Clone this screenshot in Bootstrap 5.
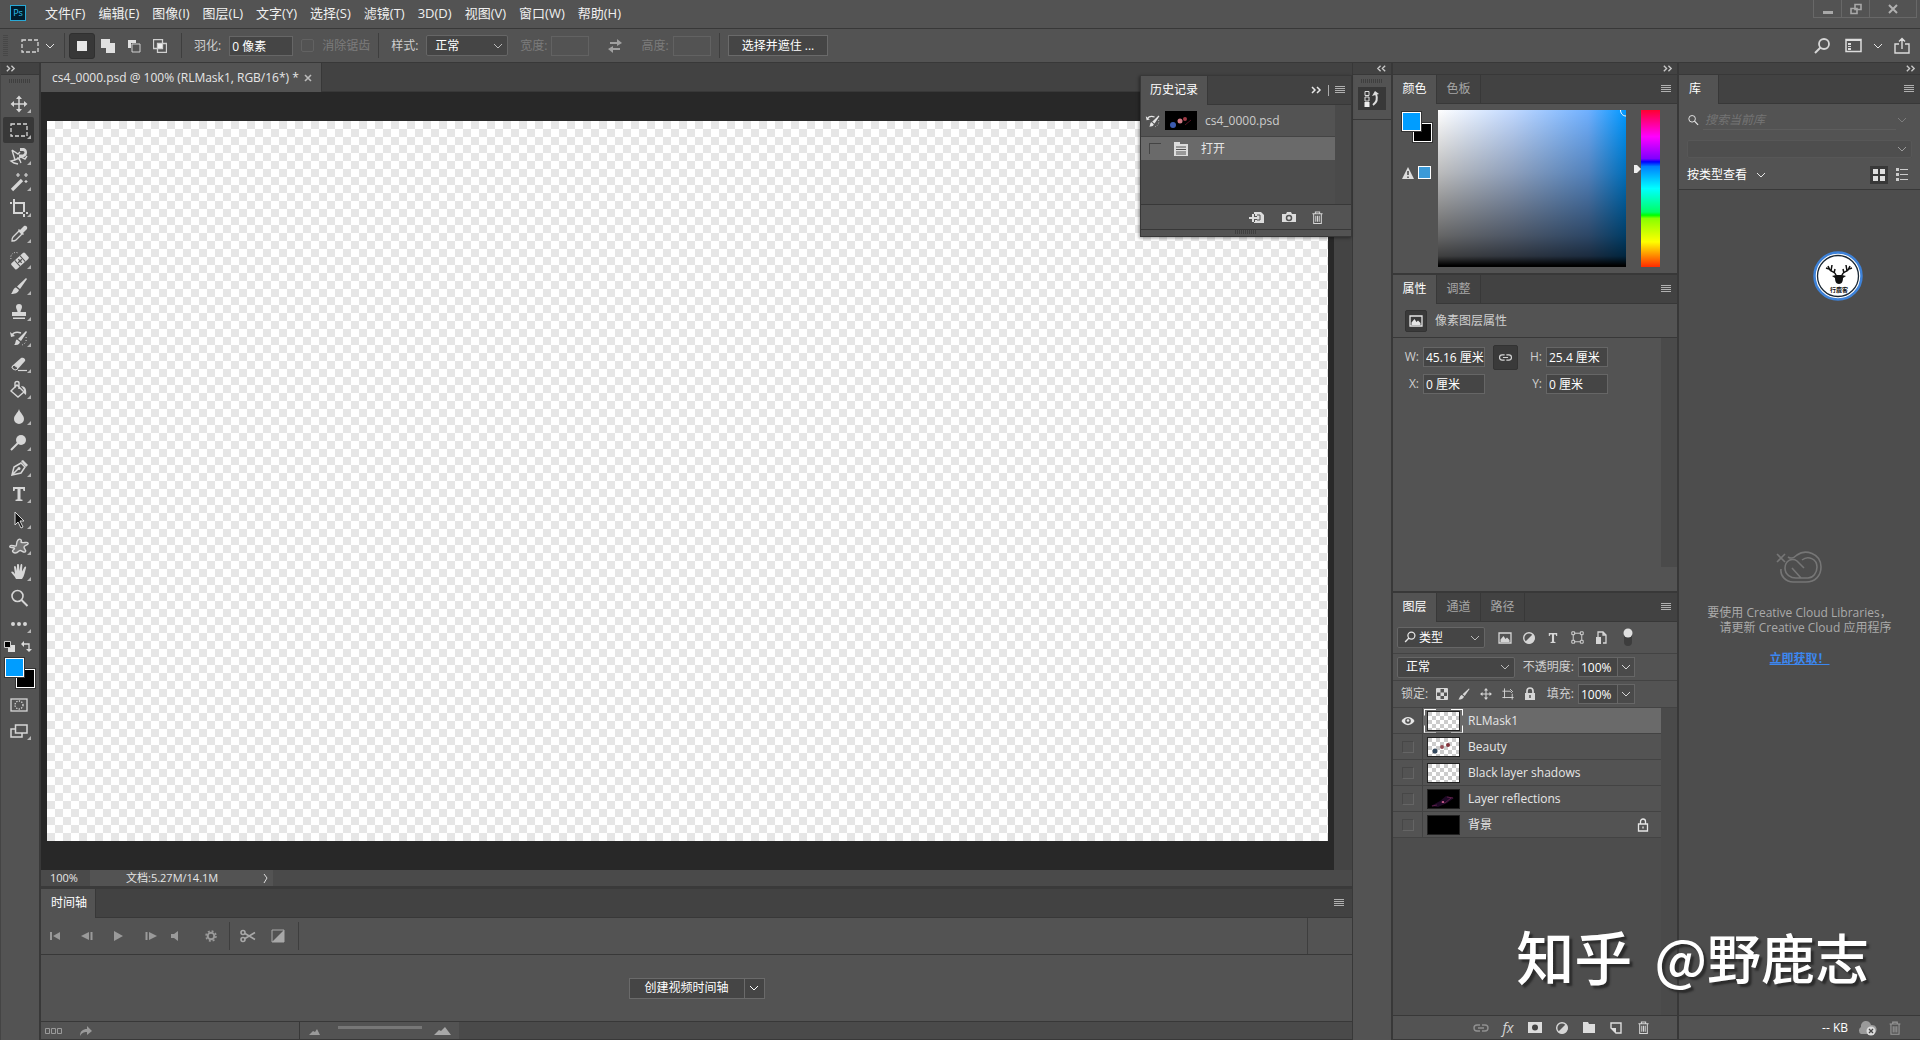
<!DOCTYPE html>
<html lang="zh-CN">
<head>
<meta charset="utf-8">
<meta name="viewport" content="width=device-width, initial-scale=1">
<title>Photoshop</title>
<link href="https://cdn.jsdelivr.net/npm/bootstrap@5.3.0/dist/css/bootstrap.min.css" rel="stylesheet">
<style>
:root{--base:#535353;--head:#424242;--line:#383838;--field:#454545;--pale:#d6d6d6}
body{font-family:"Open Sans","Noto Sans CJK SC",sans-serif;font-size:12px;line-height:18px;color:#e6e6e6;background:var(--base)}
svg{display:block;flex:none}
button,input,select{font:inherit;color:inherit}
.plain{background:none;border:0;padding:0;color:var(--pale);display:flex;align-items:center;justify-content:center;flex:none}
.i20{width:20px;height:20px}
.i12{width:12px;height:12px}
.i14{width:14px;height:14px}
.rule{width:1px;background:#3e3e3e;flex:none;align-self:stretch}
.menubar{height:29px;border-bottom:1px solid var(--line);padding:0 3px 3px 10px;gap:13px}
.menubar a{color:#f0f0f0;text-decoration:none;font-size:13px}
.pslogo{width:16px;height:16px;background:#001d2e;border:1px solid #29a9d6;color:#31c5f0;font-size:9px;line-height:14px;text-align:center;margin-right:6px}
.winctl{height:18px;border:1px solid #686868;border-top:0}
.winctl button{width:28px;border-right:1px solid #686868}
.winctl button:last-child{width:46px;border-right:0}
.optbar{height:34px;border-bottom:1px solid var(--line);padding:0 8px 0 3px}
.gripv{width:5px;height:22px;margin-right:8px;background:repeating-linear-gradient(#474747 0 1px,transparent 1px 2px)}
.griph{width:22px;height:4px;background:repeating-linear-gradient(90deg,#3f3f3f 0 1px,transparent 1px 2px)}
.mode{width:26px;height:26px}
.mode.on{background:#383838;border:1px solid #303030;border-radius:3px}
.fld{background:var(--field);border:1px solid #666;height:20px;padding:0 0 0 2px;color:#fff;border-radius:0;min-width:0;line-height:18px}
.fld:disabled{background:transparent;border-color:#626262}
.w38{width:38px}.w40{width:40px}.w62{width:62px}.w64{width:64px}
.sel{appearance:none;background:var(--field) url("data:image/svg+xml,%3Csvg xmlns='http://www.w3.org/2000/svg' width='10' height='6'%3E%3Cpath d='M1 1l4 4 4-4' fill='none' stroke='%23bbb'/%3E%3C/svg%3E") no-repeat right 4px center;border:1px solid #666;border-radius:2px;height:21px;padding:0 16px 0 8px;color:#fff;line-height:18px}
.w82{width:82px}.w88{width:88px;padding-left:21px}.w118{width:118px}
.libsel{height:18px;margin-top:4px;border-color:#5a5a5a;background-color:#4d4d4d;opacity:.7}
.off{color:#7c7c7c}
.box{width:13px;height:13px;appearance:none;border:1px solid #626262;border-radius:2px;margin:0}
.flatbtn{background:#454545;border:1px solid #6a6a6a;color:#fff;height:21px;padding:0;line-height:18px}
.maskbtn{padding:0 13px}
.dropcap{width:17px;height:20px;margin-right:42px;border:1px solid #666;border-left:0;background:#4a4a4a}
.strip{height:12px;background:var(--head);border-bottom:1px solid var(--line);color:#c8c8c8;flex:none}
.tools{width:41px;border-right:2px solid var(--line);border-left:1px solid #444}
.toolcol{padding-left:2px}
.tool{width:31px;height:26px;position:relative;border:1px solid transparent;border-radius:2px}
.tool.on{background:#383838}
.tool.more::after{content:"";position:absolute;right:2px;bottom:3px;border:2px solid transparent;border-right-color:#b5b5b5;border-bottom-color:#b5b5b5}
.minis{padding:0 7px 6px 3px}
.pair{position:relative;width:30px;height:30px}
.pair i{position:absolute;width:19px;height:19px;border:1px solid #fff;outline:1px solid #333}
.pair .fg{left:0;top:0;background:#009dff;z-index:1}
.pair .bg{right:0;bottom:0;background:#000}
.tabs{background:var(--head);height:29px;border-bottom:1px solid var(--line);flex:none}
.tabs .tb{padding:0 12px;height:29px;display:flex;align-items:center;color:#a6a6a6;background:none;border:0;border-right:1px solid var(--line)}
.tabs .tb.on{background:var(--base);color:#fff}
.tabs .tb.doc{color:#e6e6e6;padding:0 9px 0 11px;gap:5px}
.tabs.p44 .tb{width:44px;padding:0;justify-content:center}
.burger{width:10px;height:8px;padding:0;border:0;margin-right:6px;background:repeating-linear-gradient(#b0b0b0 0 1px,transparent 1px 2px)}
.work{background:#282828;padding:29px 0 29px 6px}
.checker{background:conic-gradient(#fff 25%,#e6e6e6 0 50%,#fff 0 75%,#e6e6e6 0) 8px 0/16px 16px}
.vscroll{width:18px;background:#444;margin:-29px 0 -29px 6px}
.status{height:16px;line-height:16px;background:#4a4a4a;font-size:11px}
.status .pct{width:49px;padding-left:9px}
.status .docsize{width:183px;padding-left:36px;background:var(--base)}
.timeline{border-top:3px solid #3a3a3a}
.timeline .burger{margin-right:8px}
.timebar{height:37px;border-bottom:1px solid var(--line);color:#9a9a9a}
.timefoot{height:19px;border-top:1px solid var(--line);border-bottom:1px solid var(--line);color:#9a9a9a}
.zoomer{margin-left:206px;border-left:1px solid var(--line);width:160px;height:17px}
.zoomer i{width:84px;height:3px;background:#777;margin-top:4px}
.history{position:absolute;right:0;top:12px;width:212px;background:var(--base);border:1px solid var(--line);box-shadow:-1px 1px 3px #0006}
.hrow{height:24px;width:194px;gap:12px}
.dockicons{width:41px;border-left:1px solid var(--line);border-right:2px solid var(--line)}
.dockmain{width:286px;border-right:2px solid var(--line)}
.docklib{width:241px}
.ramp{width:188px;height:157px;background:linear-gradient(transparent 0%,#0004 40%,#0009 80%,#000000c0 93%,#000 99%),linear-gradient(90deg,#fff,#c0d8ff 40%,#6fb0ff 80%,#0098ff)}
.hue{width:19px;height:157px;background:linear-gradient(#ff0030,#f0f 17%,#8000ff 31%,#00f 33%,#0080ff 36%,#0ff 50%,#0f6 65%,#0f0 67%,#8f0 69%,#ff0 84%,#ff2a00)}
.swcol{width:37px;padding:2px 0 0 1px}
.bodydk{background:#4d4d4d}
.sbar{width:16px;background:#4a4a4a}
.lab{color:#cfcfcf}
.sunk{width:22px;height:22px;background:#3a3a3a;border:1px solid #333;border-radius:2px}
.filters{gap:4px;margin-left:10px}
.lockset{gap:2px}
.lrow{height:26px;border-bottom:1px solid #434343;flex:none}
.lrow .eye{width:30px;height:25px;border-right:1px solid #434343}
.eye b{width:12px;height:12px;border:1px solid #474747;border-right-color:#656565;border-bottom-color:#656565}
.thumb{width:33px;height:20px;border:1px solid #222;position:relative}
.ck{background:conic-gradient(#fff 25%,#ccc 0 50%,#fff 0 75%,#ccc 0) 0 0/8px 8px}
.picked{background:#6a6a6a}
.picked .thumb::before,.picked .thumb::after{content:"";position:absolute;top:-3px;bottom:-3px;left:-4px;right:-4px;border:solid #fff;border-width:0 1px}
.picked .thumb::before{clip-path:polygon(0 0,100% 0,100% 7px,0 7px,0 17px,100% 17px,100% 100%,0 100%)}
.picked .thumb::after{border-width:1px 0;clip-path:polygon(0 0,12px 0,12px 100%,27px 100%,27px 0,100% 0,100% 100%,0 100%)}
.foot{height:25px;border-top:1px solid var(--line);border-bottom:1px solid var(--line);flex:none;background:var(--base)}
.layerfoot{gap:7px;padding-right:24px}
.search{background:transparent;border:0;border-bottom:1px solid #5d5d5d;color:#fff;font-style:italic;height:20px;min-width:0}
.search::placeholder{color:#737373}
.badge-deer{position:absolute;left:134px;top:188px;width:50px;height:50px}
.ccmsg{color:#aaa;line-height:15px;padding-top:12px}
.brandmark{position:absolute;right:51px;bottom:41px;font-family:"Noto Sans CJK SC",sans-serif;font-weight:500;font-size:54px;line-height:84px;color:#fff;text-shadow:3px 3px 2px #2c2c2c;pointer-events:none}
.brandmark b{font-weight:500;font-size:58px;margin-right:10px}
</style>
<script src="https://cdn.jsdelivr.net/npm/bootstrap@5.3.0/dist/js/bootstrap.bundle.min.js"></script>
</head>
<body class="vh-100 overflow-hidden d-flex flex-column position-relative">
<svg width="0" height="0" class="position-absolute" aria-hidden="true">
<defs>
<symbol id="move" viewBox="0 0 20 20"><path d="M10 3v14M3 10h14" stroke="currentColor" stroke-width="1.500"/><path d="M10 1.500l3 3.500H7zM10 18.500l3-3.500H7zM1.500 10l3.500-3v6zM18.500 10L15 7v6z" fill="currentColor"/></symbol>
<symbol id="marq" viewBox="0 0 20 20"><rect x="2" y="4" width="16" height="12" fill="none" stroke="currentColor" stroke-width="1.300" stroke-dasharray="4 2"/></symbol>
<symbol id="lasso" viewBox="0 0 20 20"><path d="M3 4l6 4 2-2M3 4l3 10 6-3 4 2 2-3M6 14l-4 1 3 2 4 1M8 12c3 0 3 3 4 5" fill="none" stroke="currentColor" stroke-width="1.400"/><path d="M11 2h4c4 1 4 8 0 9h-5V8.500h4c2-1 2-3 0-3.500h-3z" fill="currentColor"/></symbol>
<symbol id="wand" viewBox="0 0 20 20"><path d="M3 18L13 8" stroke="currentColor" stroke-width="3.200"/><path d="M9 1v4M7 3h4M17 1v4M15 3h4M17 8v3M15.500 9.500h3" stroke="currentColor" stroke-width="1.200"/></symbol>
<symbol id="crop" viewBox="0 0 20 20"><path d="M1 5h2M5 5h10v9M15 16v3M5 1v14h9M17 15h2" fill="none" stroke="currentColor" stroke-width="2"/></symbol>
<symbol id="drop" viewBox="0 0 20 20"><path d="M3 17c0-2 0-3 1-4l6-6 3 3-6 6c-1 1-2 1-4 1z" fill="none" stroke="currentColor" stroke-width="1.300"/><path d="M9 6l5 5 1-1-1-1 4-4c1-2-1-4-3-3l-4 4-1-1z" fill="currentColor"/></symbol>
<symbol id="heal" viewBox="0 0 20 20"><g transform="rotate(-42 11 11)"><rect x="2" y="7" width="18" height="8" rx="1.500" fill="currentColor"/><path d="M7.500 7v8M14.500 7v8" stroke="#535353"/><path d="M11 8.500v5M8.500 11h5" stroke="#535353" stroke-width="1.400"/></g><path d="M2 9a5 5 0 017-6" fill="none" stroke="currentColor" stroke-dasharray="1 1.500"/></symbol>
<symbol id="brush" viewBox="0 0 20 20"><path d="M17 2l1 1-7 10-3-2.500zM7 11.500l3 2.500c-1 3-4 4-8 4 2-2 2-6 5-6.500z" fill="currentColor"/></symbol>
<symbol id="stamp" viewBox="0 0 20 20"><path d="M10 2a3 3 0 013 3c0 2-1.500 3-1.500 5H17v4H3v-4h5.500C8.500 8 7 7 7 5a3 3 0 013-3zM4 15.500h12V17H4z" fill="currentColor"/></symbol>
<symbol id="hist" viewBox="0 0 20 20"><path d="M17 3l1 1-6 9-3-2zM8 11.500l3 2.500c-1 3-3 3-6 3 2-1 1-5 3-5.500z" fill="currentColor"/><path d="M3 7c2-3 6-3 9-2" fill="none" stroke="currentColor" stroke-width="1.500"/><path d="M1 4l1 5 4-1z" fill="currentColor"/><path d="M17 9c1 4-1 7-4 8" fill="none" stroke="currentColor" stroke-dasharray="1 2"/></symbol>
<symbol id="erase" viewBox="0 0 20 20"><path d="M3 12L12 4c2-1 5 1 4 3l-8 9H5c-2-1-3-3-2-4z" fill="currentColor"/><path d="M5 11l4 3-2 2c-2 0-4-2-4-3z" fill="#535353" stroke="currentColor"/><path d="M9 16.500h9" stroke="currentColor" stroke-width="1.200"/></symbol>
<symbol id="bucket" viewBox="0 0 20 20"><path d="M8 5l7 7-6 5-7-6zM6 8V3c0-2 4-2 4 0v6" fill="none" stroke="currentColor" stroke-width="1.400"/><path d="M12 6c4 0 6 3 5 9-2-1-3-3-2-5z" fill="currentColor"/></symbol>
<symbol id="blur" viewBox="0 0 20 20"><path d="M10 3c1 4 5 6 5 10a5 5 0 01-10 0c0-4 4-6 5-10z" fill="currentColor"/></symbol>
<symbol id="dodge" viewBox="0 0 20 20"><circle cx="12" cy="8" r="5" fill="currentColor"/><path d="M9 11l-7 7" stroke="currentColor" stroke-width="2"/></symbol>
<symbol id="pen" viewBox="0 0 20 20"><path d="M3 17l2-8 7-4 4 4-4 6zM3 17l6-6" fill="none" stroke="currentColor" stroke-width="1.500"/><circle cx="10" cy="10.500" r="1.500" fill="currentColor"/><path d="M12 3l2-1 5 5-2 2z" fill="currentColor"/></symbol>
<symbol id="type" viewBox="0 0 20 20"><path d="M4 3h12v4h-1.500l-.5-2h-2.500v10.300l2 .5V17H6.500v-1.200l2-.5V5H6l-.5 2H4z" fill="currentColor"/></symbol>
<symbol id="arrow" viewBox="0 0 20 20"><path d="M6 2v13l3-3 3 6 2-1-3-6h4z" fill="#111" stroke="currentColor"/></symbol>
<symbol id="shape" viewBox="0 0 20 20"><path d="M9 4c2-2 4 0 3 2 2 2 6-1 7 1s-4 2-4 4 3 4 1 5-4-3-6-1-4 3-6 1 3-3 1-4-5 0-4-2 5 1 6 0 0-4 2-6z" fill="#757575" stroke="currentColor" stroke-width="1.400"/></symbol>
<symbol id="hand" viewBox="0 0 20 20"><path d="M7 17c-1-3-4-5-5-7 1-1 2-1 4 2L5 5c0-1.500 1.500-1.500 2 0l1 4V3c0-1.500 2-1.500 2 0l.5 6L11.500 3c.3-1.500 2-1 1.800.5L13 9.500 15.500 5c1-1 2-.5 1.500 1-1 3-1.500 8-4 11z" fill="currentColor"/></symbol>
<symbol id="zoom" viewBox="0 0 20 20"><circle cx="8.500" cy="8" r="5.500" fill="none" stroke="currentColor" stroke-width="1.600"/><path d="M12.500 12l6 6" stroke="currentColor" stroke-width="2"/></symbol>
<symbol id="dots" viewBox="0 0 20 20"><path d="M4 10h0M10 10h0M16 10h0" stroke="currentColor" stroke-width="4" stroke-linecap="round"/></symbol>
<symbol id="qmask" viewBox="0 0 20 20"><rect x="2" y="4" width="16" height="12" fill="none" stroke="currentColor" stroke-width="1.300"/><circle cx="10" cy="10" r="4" fill="none" stroke="currentColor" stroke-width="1.300" stroke-dasharray="1.300 1.300"/></symbol>
<symbol id="screen" viewBox="0 0 20 20"><path d="M6.500 4h11.500v8H6.500zM6 8H2v8h11v-4" fill="none" stroke="currentColor" stroke-width="1.500"/></symbol>
<symbol id="chev" viewBox="0 0 12 12"><path d="M2 4l4 4 4-4" fill="none" stroke="currentColor"/></symbol>
<symbol id="dbl" viewBox="0 0 12 12"><path d="M2 3l3 3-3 3M7 3l3 3-3 3" fill="none" stroke="currentColor" stroke-width="1.500"/></symbol>
<symbol id="loupe" viewBox="0 0 20 20"><circle cx="12" cy="8" r="5" fill="none" stroke="currentColor" stroke-width="1.800"/><path d="M8.500 11.500L3 17" stroke="currentColor" stroke-width="2"/></symbol>
<symbol id="trash" viewBox="0 0 20 20"><path d="M4 5.500h12M7.500 5V3.500h5V5M5.500 6v11h9V6M8 8v7M10 8v7M12 8v7" fill="none" stroke="currentColor" stroke-width="1.200"/></symbol>
<symbol id="link" viewBox="0 0 20 20"><path d="M9 7H6a3 3 0 000 6h3M11 7h3a3 3 0 010 6h-3M7 10h6" fill="none" stroke="currentColor" stroke-width="1.400"/></symbol>
<symbol id="image" viewBox="0 0 20 20"><path d="M4 5h12v10H4z" fill="none" stroke="currentColor" stroke-width="1.300"/><path d="M5.500 14v-2.500L8.500 8l2 3 1.500-1.500 2.500 2.500v2z" fill="currentColor"/></symbol>
<symbol id="half" viewBox="0 0 20 20"><circle cx="10" cy="10" r="5.300" fill="none" stroke="currentColor" stroke-width="1.400"/><path d="M14 6a5.500 5.500 0 01-8 8z" fill="currentColor"/></symbol>
<symbol id="vec" viewBox="0 0 20 20"><path d="M5.500 5.500h9v9h-9z" fill="none" stroke="currentColor"/><path d="M4 4h3v3H4zM13 4h3v3h-3zM4 13h3v3H4zM13 13h3v3h-3z" fill="#535353" stroke="currentColor"/></symbol>
<symbol id="smart" viewBox="0 0 20 20"><path d="M7 9V4h5l3 3v8h-3M12 4v3h3" fill="none" stroke="currentColor" stroke-width="1.300"/><path d="M5 9h5v7H5z" fill="currentColor"/></symbol>
<symbol id="grid" viewBox="0 0 20 20"><path d="M4.500 4.500h11v11h-11z" fill="none" stroke="currentColor"/><path d="M5 5h3.500v3.500H5zM12 5h3.500v3.500H12zM8.500 8.500H12V12H8.500zM5 12h3.500v3.500H5zM12 12h3.500v3.500H12z" fill="currentColor"/></symbol>
<symbol id="board" viewBox="0 0 20 20"><path d="M5 2v14M2 6h11l3 3M2 15h16M16 10v8M13 3l4 4" fill="none" stroke="currentColor" stroke-width="1.300"/></symbol>
<symbol id="lock" viewBox="0 0 20 20"><path d="M5 9h10v7H5z" fill="currentColor"/><path d="M7 9V7a3 3 0 016 0v2" fill="none" stroke="currentColor" stroke-width="1.700"/><path d="M10 11v3" stroke="#535353" stroke-width="1.500"/></symbol>
<symbol id="lockline" viewBox="0 0 20 20"><path d="M5.500 9h9v7h-9zM7.500 9V6.500a2.500 2.500 0 015 0V9M10 11.500v2" fill="none" stroke="currentColor" stroke-width="1.300"/></symbol>
<symbol id="eye" viewBox="0 0 20 20"><path d="M3.500 10c3-5.500 10-5.500 13 0-3 5.500-10 5.500-13 0z" fill="currentColor"/><circle cx="10" cy="10" r="2.800" fill="#535353"/><circle cx="10" cy="9.500" r="1.300" fill="currentColor"/></symbol>
</defs>
</svg>

<nav class="menubar d-flex align-items-center flex-shrink-0" aria-label="菜单">
  <div class="pslogo">Ps</div>
  <a href="#">文件(F)</a><a href="#">编辑(E)</a><a href="#">图像(I)</a><a href="#">图层(L)</a><a href="#">文字(Y)</a><a href="#">选择(S)</a><a href="#">滤镜(T)</a><a href="#">3D(D)</a><a href="#">视图(V)</a><a href="#">窗口(W)</a><a href="#">帮助(H)</a>
  <div class="winctl d-flex ms-auto align-self-start">
    <button class="plain" aria-label="最小化"><svg width="12" height="12"><path d="M1 8h10v3H1z" fill="#a8a8a8"/></svg></button>
    <button class="plain" aria-label="还原"><svg width="12" height="12"><path d="M5 1.500h6v5H5zM1 5.500h6v5H1z" fill="#535353" stroke="#a8a8a8" stroke-width="1.600"/></svg></button>
    <button class="plain" aria-label="关闭"><svg width="12" height="12"><path d="M2 2l8 8M10 2l-8 8" stroke="#b0b0b0" stroke-width="2"/></svg></button>
  </div>
</nav>

<div class="optbar d-flex align-items-center flex-shrink-0">
  <div class="gripv"></div>
  <button class="plain i20 ms-1" aria-label="矩形选框"><svg class="i20"><use href="#marq"/></svg></button>
  <svg class="i12 mx-1"><use href="#chev"/></svg>
  <div class="rule my-1 ms-1 me-1"></div>
  <button class="plain mode on" aria-label="新选区"><svg class="i14"><path d="M2 2h10v10H2z" fill="#e8e8e8"/></svg></button>
  <button class="plain mode" aria-label="添加"><svg class="i14"><path d="M0 0h9v4h5v10H5V9H0z" fill="#e0e0e0"/></svg></button>
  <button class="plain mode" aria-label="减去"><svg class="i14"><path d="M1 1h8v3H4v5H1z" fill="#e0e0e0"/><path d="M5 5h8v8H5z" fill="none" stroke="#d0d0d0"/></svg></button>
  <button class="plain mode" aria-label="交叉"><svg class="i14"><path d="M.500.500h9v9h-9zM4.500 4.500h9v9h-9z" fill="none" stroke="#d0d0d0" stroke-width="1.300"/><path d="M5 5h4v4H5z" fill="#eee"/></svg></button>
  <div class="rule my-1 ms-2 me-2"></div>
  <label class="lab ms-1 me-2" for="feather">羽化:</label>
  <input id="feather" class="fld w64" value="0 像素">
  <input id="aa" type="checkbox" class="box ms-2 me-2" disabled><label class="off" for="aa">消除锯齿</label>
  <div class="rule my-1 mx-2 ms-2"></div>
  <label class="lab ms-1 me-2" for="sty">样式:</label>
  <select id="sty" class="sel w82"><option>正常</option></select>
  <label class="off ms-2 ps-1 me-1" for="wd">宽度:</label><input id="wd" class="fld w38" disabled>
  <button class="plain i20 mx-3" aria-label="互换"><svg width="16" height="16" fill="#a0a0a0"><path d="M3 4h7V1l5 4-5 3V6H3zM13 12H6v3l-5-4 5-3v2h7z"/></svg></button>
  <label class="off me-1" for="ht">高度:</label><input id="ht" class="fld w38" disabled>
  <div class="rule my-1 ms-2 me-2"></div>
  <button class="flatbtn maskbtn">选择并遮住 ...</button>
  <div class="d-flex align-items-center ms-auto gap-2">
    <button class="plain i20" aria-label="搜索"><svg class="i20"><use href="#loupe"/></svg></button>
    <button class="plain i20 ms-1" aria-label="工作区"><svg width="18" height="15"><path d="M1 1.500h15v12H1z" fill="none" stroke="#dcdcdc" stroke-width="1.500"/><path d="M1 1h15v2H1zM3 5h3v2H3zM3 8h3v1H3zM3 10h3v2H3z" fill="#dcdcdc"/></svg></button>
    <svg class="i12"><use href="#chev"/></svg>
    <button class="plain i20" aria-label="共享"><svg width="16" height="18"><path d="M5 7H1v9h14V7h-4M8 12V2M5 4.500L8 1.500l3 3" fill="none" stroke="#dcdcdc" stroke-width="1.400"/></svg></button>
  </div>
</div>

<div class="d-flex flex-grow-1" style="min-height:0">
  <aside class="tools d-flex flex-column flex-shrink-0">
    <div class="strip d-flex align-items-center ps-1"><svg width="11" height="11"><use href="#dbl"/></svg></div>
    <div class="griph mx-auto mt-1 mb-2"></div>
    <div id="toollist" class="toolcol d-flex flex-column"></div>
    <div class="minis d-flex justify-content-between mt-1">
      <svg width="11" height="11"><path d="M4 4h7v7H4z" fill="#ddd"/><path d="M.500.500h6v6h-6z" fill="#000" stroke="#ccc"/></svg>
      <svg width="11" height="11"><path d="M3 3h5v5" fill="none" stroke="#ddd" stroke-width="1.300"/><path d="M0 3l3-3v6zM8 11L5 8h6z" fill="#ddd"/></svg>
    </div>
    <div class="pair ms-1 mb-1"><i class="fg"></i><i class="bg"></i></div>
    <div class="toolcol d-flex flex-column">
      <button class="plain tool" aria-label="快速蒙版"><svg class="i20"><use href="#qmask"/></svg></button>
      <button class="plain tool more" aria-label="屏幕模式"><svg class="i20"><use href="#screen"/></svg></button>
    </div>
  </aside>

  <main class="d-flex flex-column flex-grow-1 position-relative" style="min-width:0">
    <div class="tabs d-flex">
      <div class="tb on doc"><span>cs4_0000.psd @ 100% (RLMask1, RGB/16*) *</span><button class="plain" aria-label="关闭文档"><svg width="8" height="8"><path d="M1 1l6 6M7 1L1 7" stroke="#bbb" stroke-width="1.600"/></svg></button></div>
    </div>
    <div class="work d-flex flex-grow-1">
      <div class="checker flex-grow-1"></div>
      <div class="vscroll"></div>
    </div>
    <div class="status d-flex flex-shrink-0">
      <div class="pct">100%</div>
      <div class="docsize d-flex justify-content-between"><span>文档:5.27M/14.1M</span><svg class="me-1" width="6" height="14"><path d="M1 4l3 4-3 5" fill="none" stroke="#ddd"/></svg></div>
    </div>
    <section class="timeline flex-shrink-0">
      <div class="tabs d-flex align-items-center"><button class="tb on px-2">&thinsp;时间轴</button><button class="burger ms-auto" aria-label="菜单"></button></div>
      <div class="timebar d-flex align-items-center ps-1">
        <button class="plain i20 me-2" aria-label="首帧"><svg width="12" height="10" fill="#9a9a9a"><path d="M1 1h2v8H1zM11 1v8L4 5z"/></svg></button>
        <button class="plain i20 ms-1 me-2" aria-label="上一帧"><svg width="12" height="10" fill="#9a9a9a"><path d="M9.500 1h2v8h-2zM8 1v8L0 5z"/></svg></button>
        <button class="plain i20 ms-1 me-2" aria-label="播放"><svg width="12" height="10" fill="#9a9a9a"><path d="M1 0v10l9-5z"/></svg></button>
        <button class="plain i20 ms-1 me-1" aria-label="下一帧"><svg width="12" height="10" fill="#9a9a9a"><path d="M.500 1h2v8h-2zM4 1v8l8-4z"/></svg></button>
        <button class="plain i20 me-2" aria-label="声音"><svg width="12" height="10" fill="#9a9a9a"><path d="M2 3h3l4-3v10L5 7H2z"/></svg></button>
        <button class="plain i20 ms-2" aria-label="设置"><svg class="i14"><circle cx="7" cy="7" r="3.300" fill="none" stroke="#9a9a9a" stroke-width="2"/><circle cx="7" cy="7" r="5" fill="none" stroke="#9a9a9a" stroke-width="1.500" stroke-dasharray="2 1.930"/></svg></button>
        <div class="rule my-1 mx-2"></div>
        <button class="plain i20" aria-label="拆分"><svg width="16" height="14" fill="none" stroke="#a8a8a8" stroke-width="1.600"><circle cx="3" cy="3.500" r="2"/><circle cx="3" cy="10.500" r="2"/><path d="M5 4.500l10 6M5 9.500l10-6"/></svg></button>
        <button class="plain i20 ms-2 me-2" aria-label="过渡"><svg class="i14 ms-1"><path d="M1 1h12v12H1z" fill="none" stroke="#a8a8a8"/><path d="M13 1v12H1z" fill="#a8a8a8"/></svg></button>
        <div class="rule my-1 ms-1"></div>
        <div class="rule ms-auto" style="margin-right:44px"></div>
      </div>
      <div class="d-flex align-items-center justify-content-center" style="height:66px">
        <button class="flatbtn" style="width:116px">创建视频时间轴</button><button class="flatbtn border-start-0 d-flex align-items-center justify-content-center" style="width:20px" aria-label="选项"><svg class="i12"><use href="#chev"/></svg></button>
      </div>
      <div class="timefoot d-flex align-items-center">
        <svg class="ms-1" width="18" height="8" fill="none" stroke="#9a9a9a"><path d="M.500 1.500h4v5h-4zM6.500 1.500h4v5h-4zM12.500 1.500h4v5h-4z"/></svg>
        <svg class="ms-3" width="14" height="12" fill="#9a9a9a"><path d="M1 11c0-5 3-7 7-7V1l5 5-5 4V7c-4 0-5 1-7 4z"/></svg>
        <div class="zoomer d-flex align-items-center">
          <svg class="ms-2 me-3" width="14" height="8" fill="#9a9a9a"><path d="M1 8l4-4 2 1 2-3 3 6z"/></svg>
          <i class="align-self-start"></i>
          <svg class="ms-2 ps-1" width="22" height="10" fill="#a8a8a8"><path d="M0 9l5-5 2 1 4-4 6 8z"/></svg>
        </div>
        <div class="flex-grow-1 align-self-stretch" style="background:#4a4a4a"></div>
      </div>
    </section>

    <section class="history">
      <div class="tabs d-flex align-items-center"><button class="tb on" style="padding:0 9px">历史记录</button>
        <div class="ms-auto d-flex align-items-center" style="gap:6px"><svg class="i12"><use href="#dbl"/></svg><div style="width:1px;height:11px;background:#aaa"></div><button class="burger" aria-label="菜单"></button></div></div>
      <div class="d-flex">
        <div style="width:194px">
          <div class="d-flex align-items-center px-1" style="height:31px"><svg width="16" height="16"><use href="#hist"/></svg>
            <svg class="mx-1 me-2" width="32" height="19"><path d="M0 0h32v19H0z" fill="#000"/><circle cx="8" cy="14" r="3" fill="#3c5bb0"/><circle cx="15" cy="10" r="2.500" fill="#d07a86"/><circle cx="20" cy="8" r="2" fill="#a03a45"/><path d="M20 14l6-5" stroke="#501020"/></svg>
            <span style="color:#ccc">cs4_0000.psd</span></div>
          <div class="hrow picked d-flex align-items-center ps-2" style="border-top:1px solid #444"><div style="width:12px;height:11px;border:solid #444;border-width:1px 0 0 1px"></div><svg width="16" height="16"><path d="M1 1h6v2h8v12H1z" fill="#ddd"/><path d="M3 6h10M3 8.500h10M3 11h10M3 13h10" stroke="#555"/></svg><span>打开</span></div>
          <div class="bodydk" style="height:44px"></div>
        </div>
        <div class="sbar"></div>
      </div>
      <div class="d-flex justify-content-end gap-2 align-items-center" style="height:25px;border-top:1px solid var(--line);padding-right:24px">
        <button class="plain i20" aria-label="新文档"><svg width="16" height="14"><path d="M5 2h7l3 3v8H5z" fill="#ddd"/><path d="M0 8h8M4 4v8" stroke="#535353" stroke-width="4"/><path d="M0 8h8M4 4v8" stroke="#ddd" stroke-width="2"/><path d="M8 5h3v5h-3" fill="none" stroke="#555"/></svg></button>
        <button class="plain i20 ms-1" aria-label="快照"><svg width="14" height="12"><path d="M0 3h4l1-2h4l1 2h4v8H0z" fill="#ddd"/><circle cx="7" cy="7" r="2.500" fill="#ddd" stroke="#535353" stroke-width="1.500"/></svg></button>
        <button class="plain i20" aria-label="删除"><svg width="17" height="17"><use href="#trash"/></svg></button>
      </div>
      <div style="height:7px;border-top:1px solid var(--line)"><div class="griph mx-auto"></div></div>
    </section>
  </main>

  <aside class="dockicons flex-shrink-0">
    <div class="strip d-flex align-items-center justify-content-end"><svg class="me-1" width="11" height="11" style="transform:scaleX(-1)"><use href="#dbl"/></svg></div>
    <div style="height:41px;border-bottom:1px solid var(--line)"><div class="griph mx-auto mt-1 mb-1"></div>
      <button class="plain mx-auto" style="width:28px;height:23px;background:#383838" aria-label="历史记录"><svg width="18" height="18"><path d="M2 1.500h4v4H2zM2 7h4v4H2z" fill="none" stroke="#ddd"/><path d="M1.500 12h5v5h-5z" fill="#eee"/><path d="M10 15c4-3 5-6 3-11" fill="none" stroke="#ddd" stroke-width="2"/><path d="M9 6l3-5 4 3z" fill="#ddd"/></svg></button></div>
  </aside>

  <aside class="dockmain d-flex flex-column flex-shrink-0">
    <div class="strip d-flex align-items-center justify-content-end pe-1"><svg width="11" height="11"><use href="#dbl"/></svg></div>
    <section class="flex-shrink-0" style="height:200px;border-bottom:2px solid var(--line)">
      <div class="tabs p44 d-flex align-items-center"><button class="tb on">颜色</button><button class="tb">色板</button><button class="burger ms-auto" aria-label="菜单"></button></div>
      <div class="d-flex ps-2" style="padding-top:6px">
        <div class="swcol"><div class="pair"><i class="fg"></i><i class="bg"></i></div>
          <div class="d-flex align-items-center gap-1 mt-4"><svg width="12" height="12"><path d="M6 0l6 12H0z" fill="#ddd"/><path d="M6 4v4M6 9.500v1.500" stroke="#444" stroke-width="1.500"/></svg><div style="width:13px;height:13px;background:#3b9ad8;border:1px solid #fff"></div></div></div>
        <svg class="position-absolute" style="margin-left:219px" width="6" height="7"><path d="M.500 0c0 3 2 6 5.500 6" fill="none" stroke="#fff"/></svg>
        <div class="ramp"></div>
        <svg class="ms-2" width="7" height="157" viewBox="0 -59 7 157"><path d="M0-4l3 0 4 4-4 4H0z" fill="#eee"/></svg>
        <div class="hue"></div>
      </div>
    </section>
    <section class="flex-shrink-0 d-flex flex-column" style="height:318px;border-bottom:2px solid var(--line)">
      <div class="tabs p44 d-flex align-items-center"><button class="tb on">属性</button><button class="tb">调整</button><button class="burger ms-auto" aria-label="菜单"></button></div>
      <div class="d-flex align-items-center gap-2 ps-2" style="height:34px;border-bottom:1px solid var(--line)"><div class="sunk ms-1 d-flex align-items-center justify-content-center"><svg class="i20"><use href="#image"/></svg></div><span class="lab">像素图层属性</span></div>
      <div class="d-flex flex-grow-1">
        <div class="flex-grow-1 pt-1">
          <div class="d-flex align-items-center" style="height:30px"><label class="lab text-end pe-1" style="width:30px" for="pw">W:</label><input id="pw" class="fld w62" value="45.16 厘米"><button class="plain sunk mx-2" style="width:25px;height:25px" aria-label="链接"><svg width="17" height="17"><use href="#link"/></svg></button><label class="lab text-end pe-1" style="width:20px" for="ph">H:</label><input id="ph" class="fld w62" value="25.4 厘米"></div>
          <div class="d-flex align-items-center" style="height:24px"><label class="lab text-end pe-1" style="width:30px" for="px">X:</label><input id="px" class="fld w62" value="0 厘米"><label class="lab text-end pe-1" style="width:61px" for="py">Y:</label><input id="py" class="fld w62" value="0 厘米"></div>
        </div>
        <div class="sbar" style="margin-bottom:24px"></div>
      </div>
    </section>
    <section class="d-flex flex-column flex-grow-1 bodydk">
      <div class="tabs p44 d-flex align-items-center"><button class="tb on">图层</button><button class="tb">通道</button><button class="tb">路径</button><button class="burger ms-auto" aria-label="菜单"></button></div>
      <div style="background:var(--base)">
        <div class="d-flex align-items-center ps-1" style="height:32px;border-bottom:1px solid #434343">
          <div class="position-relative"><svg class="position-absolute i14" style="left:6px;top:3px"><use href="#loupe"/></svg><select class="sel w88" aria-label="类型"><option>类型</option></select></div>
          <div class="filters d-flex">
            <button class="plain i20" aria-label="像素"><svg class="i20"><use href="#image"/></svg></button><button class="plain i20" aria-label="调整"><svg class="i20"><use href="#half"/></svg></button><button class="plain i20" aria-label="文字"><svg class="i14"><use href="#type"/></svg></button><button class="plain i20" aria-label="形状"><svg width="19" height="19"><use href="#vec"/></svg></button><button class="plain i20" aria-label="智能对象"><svg class="i20"><use href="#smart"/></svg></button>
            <svg class="ms-2" width="10" height="20"><rect x="1" y="2" width="8" height="16" rx="4" fill="#3d3d3d"/><circle cx="5" cy="5" r="4.500" fill="#e0e0e0"/></svg></div>
        </div>
        <div class="d-flex align-items-center ps-1" style="height:27px;border-bottom:1px solid #434343">
          <select class="sel w118" aria-label="混合模式"><option>正常</option></select>
          <label class="lab ms-auto me-1" for="op">不透明度:</label><input id="op" class="fld w40" value="100%"><button class="plain dropcap" aria-label="不透明度"><svg class="i12"><use href="#chev"/></svg></button>
        </div>
        <div class="d-flex align-items-center ps-2" style="height:27px;border-bottom:1px solid #434343">
          <span class="lab me-1">锁定:</span>
          <div class="lockset d-flex"><button class="plain i20" aria-label="透明像素"><svg class="i20"><use href="#grid"/></svg></button><button class="plain i20" aria-label="图像像素"><svg class="i14"><use href="#brush"/></svg></button><button class="plain i20" aria-label="位置"><svg class="i14"><use href="#move"/></svg></button><button class="plain i20" aria-label="画板"><svg class="i14"><use href="#board"/></svg></button><button class="plain i20" aria-label="全部"><svg class="i20"><use href="#lock"/></svg></button></div>
          <label class="lab ms-auto me-1" for="fl">填充:</label><input id="fl" class="fld w40" value="100%"><button class="plain dropcap" aria-label="填充"><svg class="i12"><use href="#chev"/></svg></button>
        </div>
      </div>
      <div class="d-flex flex-grow-1">
        <div class="flex-grow-1">
          <div style="background:var(--base)">
          <div class="lrow d-flex align-items-center"><div class="eye d-flex align-items-center justify-content-center"><svg class="i20"><use href="#eye"/></svg></div><div class="picked d-flex align-items-center flex-grow-1 h-100 ps-1"><div class="thumb ck"></div><span class="ms-2">RLMask1</span></div></div>
          <div class="lrow d-flex align-items-center"><div class="eye d-flex align-items-center justify-content-center"><b></b></div><div class="d-flex align-items-center flex-grow-1 ps-1"><div class="thumb ck"><svg width="31" height="18"><circle cx="7" cy="13" r="2.500" fill="#34495e"/><circle cx="14" cy="9" r="2" fill="#934c54"/><circle cx="20" cy="7" r="2" fill="#80323a"/></svg></div><span class="ms-2">Beauty</span></div></div>
          <div class="lrow d-flex align-items-center"><div class="eye d-flex align-items-center justify-content-center"><b></b></div><div class="d-flex align-items-center flex-grow-1 ps-1"><div class="thumb ck"></div><span class="ms-2">Black layer shadows</span></div></div>
          <div class="lrow d-flex align-items-center"><div class="eye d-flex align-items-center justify-content-center"><b></b></div><div class="d-flex align-items-center flex-grow-1 ps-1"><div class="thumb" style="background:#000"><svg width="31" height="18"><path d="M3 16l9-5 6-5 8 2-7 5-9 4z" fill="#1f0926"/><path d="M4 16l5-1M13 12l4 1 6-5M19 7l6 1" fill="none" stroke="#5c1f48"/><circle cx="15" cy="12" r="1" fill="#e06a9a"/></svg></div><span class="ms-2">Layer reflections</span></div></div>
          <div class="lrow d-flex align-items-center"><div class="eye d-flex align-items-center justify-content-center"><b></b></div><div class="d-flex align-items-center flex-grow-1 ps-1"><div class="thumb" style="background:#000"></div><span class="ms-2">背景</span><svg class="i20 ms-auto me-2"><use href="#lockline"/></svg></div></div>
          </div>
        </div>
        <div class="sbar"></div>
      </div>
      <div class="foot layerfoot d-flex align-items-center justify-content-end">
        <button class="plain i20" style="color:#909090" aria-label="链接"><svg class="i20"><use href="#link"/></svg></button>
        <button class="plain i20" aria-label="样式"><em style="font-size:14px">fx</em></button>
        <button class="plain i20" aria-label="蒙版"><svg width="14" height="12"><path d="M0 0h14v11H0z" fill="#ddd"/><circle cx="7" cy="5.500" r="3" fill="#444"/></svg></button>
        <button class="plain i20" aria-label="调整图层"><svg class="i20"><use href="#half"/></svg></button>
        <button class="plain i20" aria-label="组"><svg width="12" height="11"><path d="M0 0h5l1 2h6v9H0z" fill="#ddd"/></svg></button>
        <button class="plain i20" aria-label="新建"><svg width="12" height="12"><path d="M1 1h10v10H6L1 6z" fill="none" stroke="#ddd" stroke-width="1.400"/><path d="M1 6h5v5z" fill="#ddd"/></svg></button>
        <button class="plain i20" aria-label="删除"><svg width="17" height="17"><use href="#trash"/></svg></button>
      </div>
    </section>
  </aside>

  <aside class="docklib d-flex flex-column flex-shrink-0 position-relative">
    <div class="strip d-flex align-items-center justify-content-end"><svg class="me-1" width="11" height="11"><use href="#dbl"/></svg></div>
    <div class="tabs d-flex align-items-center"><button class="tb on" style="width:40px;padding:0 10px">库</button><button class="burger ms-auto" aria-label="菜单"></button></div>
    <div class="px-2" style="height:86px;border-bottom:1px solid var(--line)">
      <div class="d-flex align-items-center" style="height:32px"><svg width="12" height="12"><use href="#zoom"/></svg><input class="search flex-grow-1 ms-1" placeholder="搜索当前库" aria-label="搜索当前库"><svg class="i12 off me-1"><use href="#chev"/></svg></div>
      <select class="sel libsel w-100 d-block" aria-label="库列表"></select>
      <div class="d-flex align-items-center" style="height:33px"><span class="text-white me-2">按类型查看</span><svg class="i12"><use href="#chev"/></svg>
        <button class="plain ms-auto" style="width:18px;height:18px;background:#383838" aria-label="网格"><svg class="i14" fill="#ddd"><path d="M1 1h5v5H1zM8 1h5v5H8zM1 8h5v5H1zM8 8h5v5H8z"/></svg></button>
        <button class="plain ms-2 me-1" aria-label="列表"><svg width="12" height="13" fill="#ccc"><path d="M0 0h3v3H0zM0 5h3v3H0zM0 10h3v3H0zM4 1h8v1H4zM4 6h8v1H4zM4 11h8v1H4z"/></svg></button></div>
    </div>
    <div class="bodydk ccmsg flex-grow-1 d-flex flex-column align-items-center justify-content-center">
      <svg style="margin-bottom:20px" width="48" height="34" fill="none" stroke="#767676" stroke-width="1.600"><path d="M1 3l8 8M9 3l-8 8M12 6c3 2 6 1 9-2 8-6 24-2 24 12 0 9-6 15-15 15H17C10 31 4 25 5 18"/><path d="M28 17l-7-7c-5-4-12 0-12 7s6 10 11 10h12c5 0 9-5 9-11 0-8-9-12-15-7M16 17l9 10"/></svg>
      <div class="text-center mb-3">要使用 Creative Cloud Libraries，<br>&emsp;请更新 Creative Cloud 应用程序</div>
      <a href="#" class="fw-bold" style="color:#3c87f0">立即获取！</a>
    </div>
    <div class="foot d-flex align-items-center justify-content-end gap-1 pe-3"><span class="text-white me-1">-- KB</span><svg width="22" height="16"><path d="M5 14a4 4 0 010-7 5 5 0 0110-2 4 4 0 012 9z" fill="#9a9a9a"/><circle cx="15" cy="11" r="4.500" fill="#ddd"/><path d="M13 9l4 4M17 9l-4 4" stroke="#444" stroke-width="1.300"/></svg><button class="plain ms-1" style="color:#9a9a9a" aria-label="删除"><svg width="18" height="18"><use href="#trash"/></svg></button></div>
    <svg class="badge-deer" viewBox="0 0 50 50"><circle cx="25" cy="25" r="23.500" fill="#fff" stroke="#3e82d8" stroke-width="2.500"/><circle cx="25" cy="25" r="20.500" fill="#fff" stroke="#1a2733" stroke-width="1.300"/><path d="M26 33c-3 0-4-3-4-6l-3-2 4-1h6l4 1-3 2c0 3-1 6-4 6z" fill="#111"/><path d="M23 24c-1-3-4-3-6-5l-2-4M18 20l1-6M21 22l1-4M16 18l-3-1M29 24c1-3 4-3 6-5l2-4M34 20l-1-6M31 22l-1-4M36 18l3-1" fill="none" stroke="#111" stroke-width="1.500"/><text x="26" y="41" font-size="6" font-weight="700" text-anchor="middle" fill="#111" font-family="Noto Sans CJK SC">行鹿客</text></svg>
  </aside>
</div>
<div class="brandmark"><b>知乎</b> @野鹿志</div>
<script>
const names = {move:'移动',marq:'选框',lasso:'套索',wand:'魔棒',crop:'裁剪',drop:'吸管',heal:'修复',brush:'画笔',stamp:'图章',hist:'历史画笔',erase:'橡皮擦',bucket:'油漆桶',blur:'模糊',dodge:'减淡',pen:'钢笔',type:'文字',arrow:'路径选择',shape:'形状',hand:'抓手',zoom:'缩放',dots:'更多'};
document.getElementById('toollist').innerHTML = Object.entries(names).map(([id, n]) =>
  `<button class="plain tool ${id === 'zoom' ? '' : 'more'} ${id === 'marq' ? 'on' : ''}" aria-label="${n}"><svg class="i20"><use href="#${id}"/></svg></button>`).join('');
</script>
</body>
</html>
